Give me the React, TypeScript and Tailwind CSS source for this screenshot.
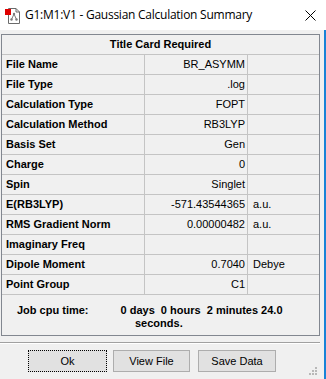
import React from "react";

const rows: { label: string; value: string; unit?: string }[] = [
  { label: "File Name", value: "BR_ASYMM" },
  { label: "File Type", value: ".log" },
  { label: "Calculation Type", value: "FOPT" },
  { label: "Calculation Method", value: "RB3LYP" },
  { label: "Basis Set", value: "Gen" },
  { label: "Charge", value: "0" },
  { label: "Spin", value: "Singlet" },
  { label: "E(RB3LYP)", value: "-571.43544365", unit: "a.u." },
  { label: "RMS Gradient Norm", value: "0.00000482", unit: "a.u." },
  { label: "Imaginary Freq", value: "" },
  { label: "Dipole Moment", value: "0.7040", unit: "Debye" },
  { label: "Point Group", value: "C1" },
];

function AppIcon() {
  return (
    <svg width="16" height="17" viewBox="0 0 16 17">
      <path d="M3.5 1.5 H11 L14.5 5 V16.5 H3.5 Z" fill="#fff" stroke="#6b6b6b" />
      <path d="M11 1.5 V5 H14.5" fill="none" stroke="#6b6b6b" />
      <circle cx="9" cy="7" r="1.2" fill="#7a7a7a" />
      <circle cx="6.5" cy="12.5" r="1.2" fill="#7a7a7a" />
      <circle cx="11.5" cy="12.5" r="1.2" fill="#7a7a7a" />
      <path d="M9 7 L6.5 12.5 M9 7 L11.5 12.5" stroke="#7a7a7a" strokeWidth="1" />
      <rect x="0" y="2" width="6" height="6" fill="#e00000" />
    </svg>
  );
}

export default function App() {
  return (
    <div className="w-[326px] h-[379px] bg-[#f0f0f0] flex flex-col relative overflow-hidden font-['Liberation_Sans',Arial,sans-serif] text-black">
      {/* title bar */}
      <div className="h-[30px] bg-white flex items-center shrink-0">
        <div className="ml-[5px] mt-[1px]">
          <AppIcon />
        </div>
        <span className="ml-[4px] text-[12px] font-['Open_Sans','Noto_Sans',sans-serif] tracking-[-0.25px]">
          G1:M1:V1 - Gaussian Calculation Summary
        </span>
        <svg className="ml-auto mr-[10px]" width="11" height="11" viewBox="0 0 11 11">
          <path d="M0.5 0.5 L10.5 10.5 M10.5 0.5 L0.5 10.5" stroke="#000" strokeWidth="1" />
        </svg>
      </div>

      <div className="flex-1 flex">
        <div className="w-[324px] flex flex-col">
          {/* summary table */}
          <div className="ml-[1px] mt-[4px] w-[319px] border border-[#828790] text-[11px]">
            <div className="h-[20px] border-b border-[#c4c4c4] flex items-center justify-center font-bold">
              Title Card Required
            </div>
            {rows.map((r) => (
              <div key={r.label} className="h-[20px] border-b border-[#c4c4c4] flex">
                <div className="w-[143px] border-r border-[#c4c4c4] flex items-center pl-[4px] font-bold">
                  {r.label}
                </div>
                <div className="w-[103px] border-r border-[#c4c4c4] flex items-center justify-end pr-[2px]">
                  {r.value}
                </div>
                <div className="w-[71px] flex items-center pl-[5px]">{r.unit}</div>
              </div>
            ))}
            <div className="h-[40px] font-bold pt-[9px] leading-[13px]">
              <div className="flex">
                <span className="ml-[15px]">Job cpu time:</span>
                <span className="ml-[32px]">0 days&nbsp; 0 hours&nbsp; 2 minutes 24.0</span>
              </div>
              <div className="ml-[133px]">seconds.</div>
            </div>
          </div>

          <div className="mt-[6px] w-[320px] border-t border-[#a0a0a0] border-b border-b-white" />

          {/* buttons */}
          <div className="mt-[6px] flex text-[11px]">
            <button className="ml-[28px] w-[79px] h-[22px] bg-[#e1e1e1] border border-dotted border-black">
              Ok
            </button>
            <button className="ml-[6px] w-[77px] h-[22px] bg-[#e1e1e1] border border-[#adadad]">
              View File
            </button>
            <button className="ml-[8px] w-[78px] h-[22px] bg-[#e1e1e1] border border-[#adadad]">
              Save Data
            </button>
          </div>
        </div>
        <div className="w-[2px] bg-[#1883d7]" />
      </div>

      {/* resize grip */}
      <svg className="absolute right-[8px] bottom-[3px]" width="10" height="10" viewBox="0 0 10 10">
        <rect x="7" y="1" width="2" height="2" fill="#b8b8b8" />
        <rect x="4" y="4" width="2" height="2" fill="#b8b8b8" />
        <rect x="7" y="4" width="2" height="2" fill="#b8b8b8" />
        <rect x="1" y="7" width="2" height="2" fill="#b8b8b8" />
        <rect x="4" y="7" width="2" height="2" fill="#b8b8b8" />
        <rect x="7" y="7" width="2" height="2" fill="#b8b8b8" />
      </svg>
    </div>
  );
}
